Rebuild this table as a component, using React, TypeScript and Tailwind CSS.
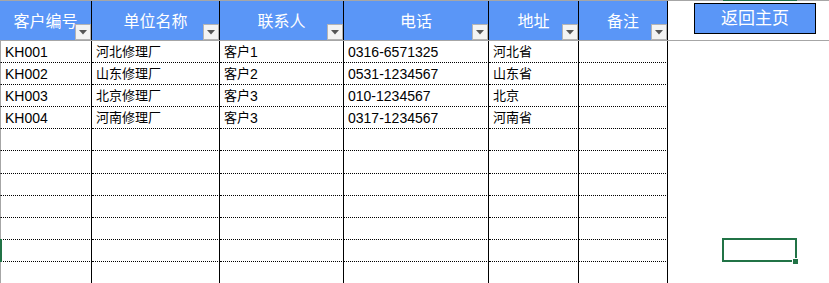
import React from 'react';

type Column = {
  title: string;
  width: string;
};

const columns: Column[] = [
  { title: '客户编号', width: 'w-[92px]' },
  { title: '单位名称', width: 'w-[128px]' },
  { title: '联系人', width: 'w-[124px]' },
  { title: '电话', width: 'w-[145px]' },
  { title: '地址', width: 'w-[90px]' },
  { title: '备注', width: 'w-[89px]' },
];

const customers: string[][] = [
  ['KH001', '河北修理厂', '客户1', '0316-6571325', '河北省', ''],
  ['KH002', '山东修理厂', '客户2', '0531-1234567', '山东省', ''],
  ['KH003', '北京修理厂', '客户3', '010-1234567', '北京', ''],
  ['KH004', '河南修理厂', '客户3', '0317-1234567', '河南省', ''],
];

// sheet keeps 11 visible rows, the rest are blank
const rows: string[][] = [
  ...customers,
  ...Array.from({ length: 7 }, () => ['', '', '', '', '', '']),
];

// latin runs are set a touch larger than the hanzi, like the sheet's default font
function CellText({ value }: { value: string }) {
  const parts = value.match(/[\u4e00-\u9fff]+|[^\u4e00-\u9fff]+/g) ?? [];
  return (
    <>
      {parts.map((p, i) =>
        /[\u4e00-\u9fff]/.test(p) ? (
          <span key={i} className="text-[13px]">{p}</span>
        ) : (
          <span key={i} className="text-[14px]">{p}</span>
        )
      )}
    </>
  );
}

function FilterButton() {
  return (
    <div className="absolute right-0 bottom-0 w-[16px] h-[16px] bg-[#f3f3f3] border border-[#b4b4b4] flex items-center justify-center">
      <svg width="8" height="5" viewBox="0 0 8 5">
        <path d="M0 0 H8 L4 4.5 Z" fill="#555" />
      </svg>
    </div>
  );
}

export default function App() {
  return (
    <div
      className="relative w-[829px] h-[283px] overflow-hidden bg-white"
      style={{ fontFamily: '"Liberation Sans", "Noto Sans CJK SC", sans-serif' }}
    >
      {/* header */}
      <div className="flex h-[41px] border-t border-b border-[#a6a6a6]">
        {columns.map((col) => (
          <div
            key={col.title}
            className={`relative ${col.width} shrink-0 h-full bg-[#5a96f7] border-r border-black flex items-center justify-center`}
          >
            <span className="text-white text-[16px] leading-none pt-[3px]">{col.title}</span>
            <FilterButton />
          </div>
        ))}
        <div className="flex-1 pl-[26px] pt-[2px]">
          <button className="w-[122px] h-[31px] bg-[#5a96f7] border border-black text-white text-[17px] leading-none flex items-center justify-center">
            返回主页
          </button>
        </div>
      </div>

      {/* body */}
      <div className="flex flex-col">
        {rows.map((row, i) => (
          <div key={i} className={`flex ${i === 5 ? 'h-[23px]' : 'h-[22px]'}`}>
            {row.map((cell, j) => (
              <div
                key={j}
                className={`${columns[j].width} shrink-0 h-full border-r border-r-black flex items-center pl-[4px] text-black whitespace-nowrap leading-none ${
                  i === rows.length - 1 ? '' : 'border-b border-b-black [border-bottom-style:dotted]'
                } ${j === 0 ? 'border-l border-l-[#a6a6a6] pl-[3px]' : ''}`}
              >
                <CellText value={cell} />
              </div>
            ))}
            <div className="flex-1" />
          </div>
        ))}
      </div>

      {/* active column marker on top edge */}
      <div className="absolute left-[723px] top-0 w-[74px] h-[1px] bg-[#217346]" />
      {/* active row marker on left edge */}
      <div className="absolute left-0 top-[239px] w-[2px] h-[23px] bg-[#217346]" />
      {/* selected cell */}
      <div className="absolute left-[722px] top-[238px] w-[75px] h-[24px] border-2 border-[#217346]" />
      <div className="absolute left-[792px] top-[258px] w-[7px] h-[7px] bg-white p-[1px]">
        <div className="w-full h-full bg-[#217346]" />
      </div>
    </div>
  );
}
